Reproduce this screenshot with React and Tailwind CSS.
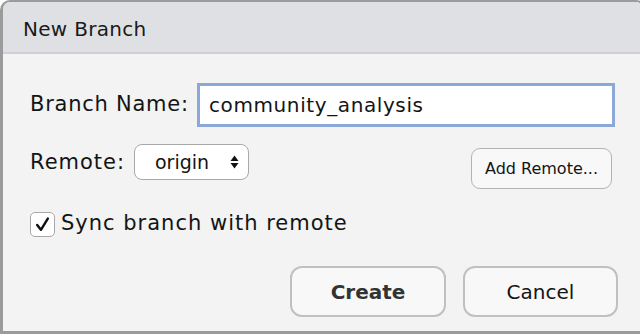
import React from "react";

const font = { fontFamily: '"DejaVu Sans", "Liberation Sans", sans-serif' };

const App = () => {
  return (
    <div className="w-[640px] h-[334px] overflow-hidden bg-white" style={font}>
      <div className="w-[646px] h-[334px] flex flex-col border-l-[3px] border-t-2 border-r-[3px] border-b-[3px] border-[#9b9b9b] rounded-t-[10px] bg-[#f2f3f2] overflow-hidden">
        {/* Titulo */}
        <div className="h-[52px] shrink-0 flex items-center pl-[20px] pt-[3px] bg-[#dfe0e4] border-b-2 border-[#cfd0d4] text-[20px] tracking-[0.3px] text-[#1a1a1a]">
          New Branch
        </div>

        <div className="flex flex-col pl-[27px] pr-[28px] text-[#141414]">
          {/* Nombre */}
          <div className="flex items-center mt-[29px] h-[44px]">
            <span className="text-[21px] tracking-[0.75px] w-[167px]">Branch Name:</span>
            <div className="flex-1 h-[44px] flex items-center pl-[9px] bg-white border-[3px] border-[#8ba8d9] text-[20px] tracking-[0.6px]">
              community_analysis
            </div>
          </div>

          {/* Remoto */}
          <div className="flex items-start mt-[17px]">
            <div className="flex items-center h-[36px]">
              <span className="text-[21px] tracking-[1px] w-[104px] pt-[2px]">Remote:</span>
              <div className="w-[115px] h-[36px] flex items-center justify-between pl-[20px] pr-[9px] bg-white border border-[#a9a9a9] rounded-[8px] text-[19px]">
                <span>origin</span>
                <svg width="9" height="16" viewBox="0 0 9 16">
                  <path d="M4.5 1.5 L8.5 7 L0.5 7 Z" fill="#111" />
                  <path d="M4.5 14.5 L8.5 9 L0.5 9 Z" fill="#111" />
                </svg>
              </div>
            </div>
            <div className="ml-auto mr-[3px] mt-[4px] w-[141px] h-[41px] flex items-center justify-center bg-[#f8f8f9] border border-[#b3b3b3] rounded-[9px] text-[16px]">
              Add Remote...
            </div>
          </div>

          {/* Sincronizar */}
          <div className="flex items-center mt-[22px] h-[26px]">
            <div className="w-[25px] h-[25px] flex items-center justify-center bg-white border border-[#a8a8a8] rounded-[5px]">
              <svg width="17" height="17" viewBox="0 0 16 16">
                <path d="M3 8.5 L6.5 13 L13 2.5" fill="none" stroke="#111" strokeWidth="2.3" strokeLinecap="round" strokeLinejoin="round" />
              </svg>
            </div>
            <span className="ml-[6px] text-[21px] tracking-[1px]">Sync branch with remote</span>
          </div>

          {/* Botones */}
          <div className="flex justify-end gap-[17px] mt-[29px] -mr-[3px]">
            <div className="w-[156px] h-[51px] flex items-center justify-center bg-[#f8f8f9] border-2 border-[#c0c0c0] rounded-[12px] text-[20px] font-bold text-[#333]">
              Create
            </div>
            <div className="w-[155px] h-[51px] flex items-center justify-center bg-[#f8f8f9] border-2 border-[#c0c0c0] rounded-[12px] text-[20px]">
              Cancel
            </div>
          </div>
        </div>
      </div>
    </div>
  );
};

export default App;
